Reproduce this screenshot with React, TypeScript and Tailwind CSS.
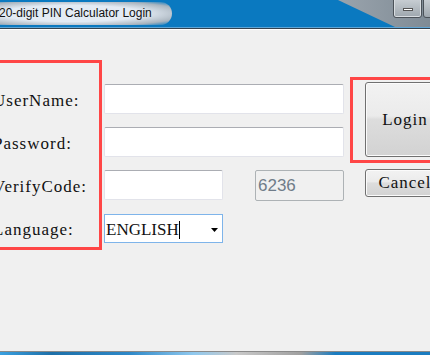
const SERIF = "font-['Liberation_Serif','Times_New_Roman',serif] text-[17px] text-[#111]";

// Win7 style sunken text box
function TextBox({ className = '' }: { className?: string }) {
  return (
    <div
      className={`h-[30px] rounded-[2px] border border-[#e2e3ea] border-t-[#abadb3] bg-white ${className}`}
    />
  );
}

function PushButton({ label, className = '' }: { label: string; className?: string }) {
  return (
    <div
      className={`flex items-center justify-center rounded-[3px] border border-[#707070] bg-[linear-gradient(#f2f2f2_0%,#ebebeb_45%,#dddddd_50%,#d2d2d2_100%)] shadow-[inset_0_0_0_1px_#fbfbfb] ${className}`}
    >
      <span className={`${SERIF} tracking-[1px]`}>{label}</span>
    </div>
  );
}

const LABELS = ['UserName:', 'Password:', 'VerifyCode:', 'Language:'];

export default function App() {
  return (
    <div className="flex h-[355px] w-[430px] flex-col overflow-hidden bg-[#f0f0f0]">
      {/* ── Title bar ─────────────────────────────────────────── */}
      <div className="relative h-[27px] shrink-0 overflow-hidden bg-[#0a79c0]">
        <div className="absolute -left-[28px] top-[2px] h-[23px] w-[200px] rounded-full bg-[radial-gradient(ellipse_at_center,#e3ebf4_50%,#aab5bf_80%,transparent_100%)]" />
        <svg className="absolute right-0 top-0" width="92" height="27" viewBox="0 0 92 27">
          <defs>
            <linearGradient id="tb" x1="0" y1="0" x2="1" y2="0">
              <stop offset="0" stopColor="#9aa4ad" />
              <stop offset="1" stopColor="#7f8b95" />
            </linearGradient>
          </defs>
          <polygon points="0,0 92,0 92,27 57,27" fill="url(#tb)" />
        </svg>
        <span className="relative -ml-[1px] block font-['Liberation_Sans',Arial,sans-serif] text-[12px] leading-[27px] text-[#111]">
          20-digit PIN Calculator Login
        </span>
        <div className="absolute left-[393px] -top-[2px] flex h-[20px] w-[29px] items-center justify-center rounded-b-[3px] border border-[#4b5259] bg-[linear-gradient(#c9cfd4,#9ea7ae)] shadow-[inset_0_0_0_1px_#d8dde1]">
          <div className="mt-[3px] h-[3px] w-[10px] border border-[#555] bg-white" />
        </div>
        <div className="absolute left-[423px] -top-[2px] h-[20px] w-[30px] rounded-b-[3px] border border-[#4b5259] bg-[linear-gradient(#c9cfd4,#9ea7ae)]" />
      </div>
      <div className="h-px shrink-0 bg-[#5fa6d6]" />
      <div className="h-px shrink-0 bg-[#34434f]" />

      {/* ── Client area ───────────────────────────────────────── */}
      <div className="flex flex-1 items-start overflow-hidden border-t border-white">
        {/* labels, boxed in red */}
        <div className="-ml-[13px] mt-[30px] flex w-[115px] shrink-0 flex-col gap-[13px] border-[3px] border-[#ff4646] pb-[4px] pt-[21px]">
          {LABELS.map((l) => (
            <div key={l} className="flex h-[30px] items-center pl-[3px] pt-[4px]">
              <span className={`${SERIF} whitespace-nowrap tracking-[1px]`}>{l}</span>
            </div>
          ))}
        </div>

        {/* fields */}
        <div className="ml-[2px] mt-[54px] flex w-[240px] shrink-0 flex-col gap-[13px]">
          <TextBox />
          <TextBox />
          <div className="flex items-start">
            <TextBox className="w-[119px]" />
            <div className="ml-auto flex h-[31px] w-[89px] items-center rounded-[2px] border border-[#adb2b5] bg-[#f0f0f0] pl-[2px]">
              <span className="font-['Liberation_Sans',Arial,sans-serif] text-[17px] text-[#6f7c89]">6236</span>
            </div>
          </div>
          <div className="flex h-[29px] w-[119px] items-center border border-[#7eb4ea] bg-white pl-[1px] pt-[2px]">
            <span className={SERIF}>ENGLISH</span>
            <div className="h-[18px] w-px bg-black" />
            <svg className="ml-auto mr-[4px]" width="7" height="4" viewBox="0 0 7 4">
              <polygon points="0,0 7,0 3.5,4" fill="#000" />
            </svg>
          </div>
        </div>

        {/* buttons */}
        <div className="ml-[6px] mt-[47px] flex shrink-0 flex-col">
          <div className="border-[3px] border-[#ff4646] pb-[3px] pl-[12px] pr-[20px] pt-[2px]">
            <PushButton label="Login" className="h-[75px] w-[80px]" />
          </div>
          <PushButton label="Cancel" className="ml-[15px] mt-[6px] h-[28px] w-[80px]" />
        </div>
      </div>

      {/* ── Taskbar edge ─────────────────────────────────────── */}
      <div className="h-px shrink-0 bg-[#8a8a8a]" />
      <div className="h-[3px] shrink-0 bg-[linear-gradient(90deg,#3aa0e0_0%,#1d6fa8_12%,#2d88c8_30%,#8fc8ee_45%,#c9c9c9_55%,#a0a0a0_70%,#1a7cc0_78%,#1a7cc0_100%)]" />
    </div>
  );
}
